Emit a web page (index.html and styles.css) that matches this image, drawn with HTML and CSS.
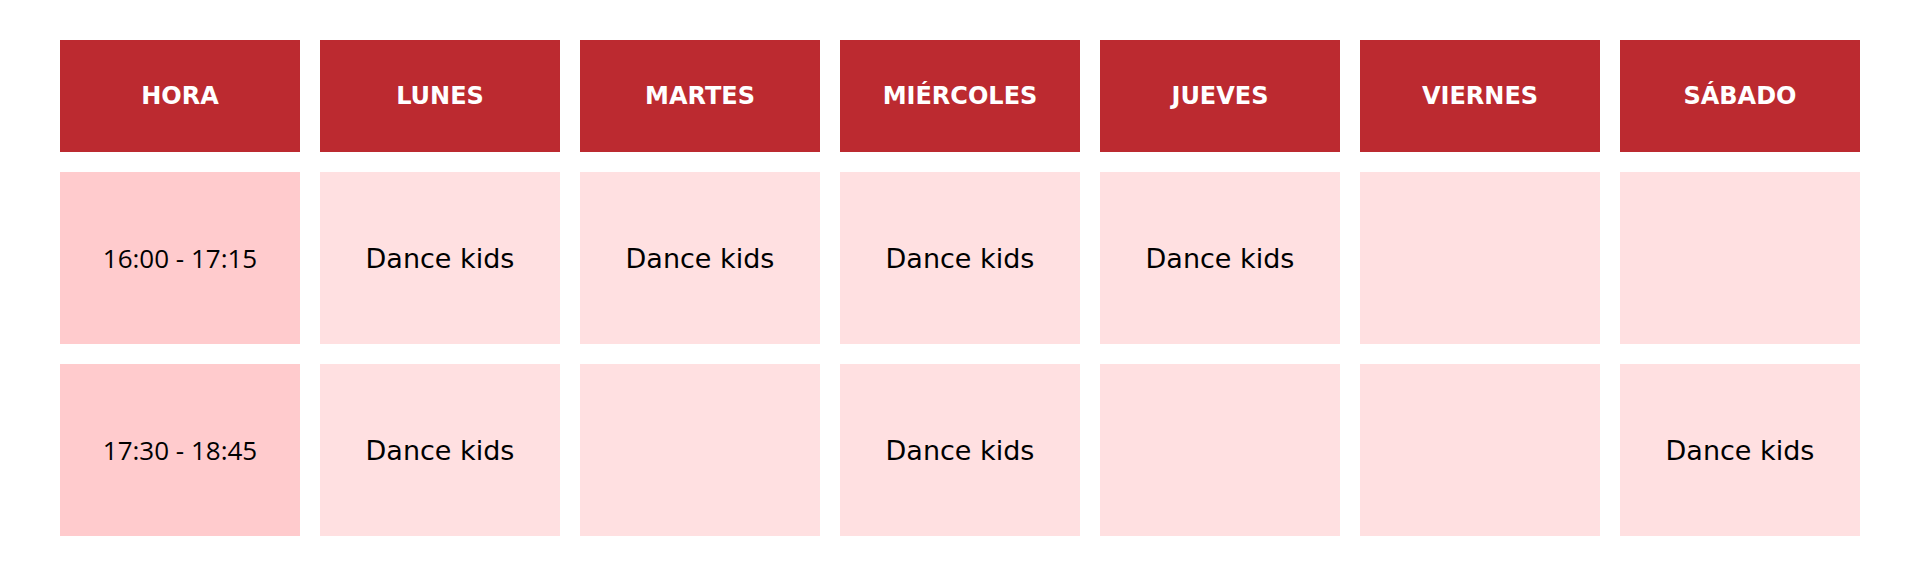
FILE: index.html
```html
<!DOCTYPE html>
<html lang="es">
<head>
<meta charset="utf-8">
<title>Horario</title>
<link rel="stylesheet" href="styles.css">
</head>
<body>
<div class="schedule">
  <div class="head">HORA</div>
  <div class="head">LUNES</div>
  <div class="head">MARTES</div>
  <div class="head">MIÉRCOLES</div>
  <div class="head">JUEVES</div>
  <div class="head">VIERNES</div>
  <div class="head">SÁBADO</div>

  <div class="cell time">16:00 - 17:15</div>
  <div class="cell">Dance kids</div>
  <div class="cell">Dance kids</div>
  <div class="cell">Dance kids</div>
  <div class="cell">Dance kids</div>
  <div class="cell"></div>
  <div class="cell"></div>

  <div class="cell time">17:30 - 18:45</div>
  <div class="cell">Dance kids</div>
  <div class="cell"></div>
  <div class="cell">Dance kids</div>
  <div class="cell"></div>
  <div class="cell"></div>
  <div class="cell">Dance kids</div>
</div>
</body>
</html>
```
FILE: styles.css
```css
html, body {
  margin: 0;
  padding: 0;
  background: #ffffff;
}

body {
  font-family: "DejaVu Sans", "Open Sans", sans-serif;
}

.schedule {
  display: grid;
  grid-template-columns: repeat(7, 240px);
  grid-template-rows: 112px 172px 172px;
  gap: 20px;
  padding: 40px 60px 0 60px;
}

.head {
  background: #bc2a30;
  color: #ffffff;
  font-weight: bold;
  font-size: 24px;
  display: flex;
  align-items: center;
  justify-content: center;
}

.cell {
  background: #ffe0e1;
  color: #000000;
  font-size: 27px;
  display: flex;
  align-items: center;
  justify-content: center;
}

.cell.time {
  background: #ffcbcd;
  font-family: "Open Sans", sans-serif;
  font-size: 26px;
}
```
